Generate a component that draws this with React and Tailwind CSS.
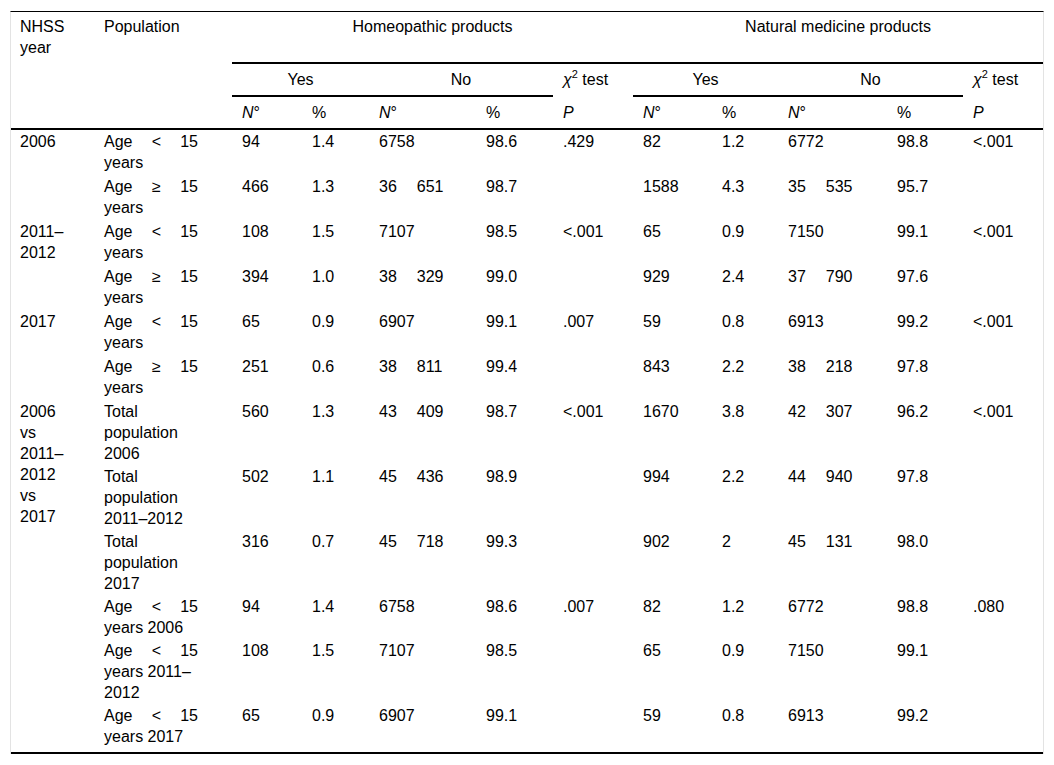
import React from "react";

const J = (a, b, c) => ({ j: [a, b, c] });

const rows = [
  { year: ["2006"], span: 2, pop: [J("Age", "<", "15"), "years"], v: ["94", "1.4", "6758", "98.6", ".429", "82", "1.2", "6772", "98.8", "<.001"] },
  { pop: [J("Age", "≥", "15"), "years"], v: ["466", "1.3", ["36", "651"], "98.7", "", "1588", "4.3", ["35", "535"], "95.7", ""] },
  { year: ["2011–", "2012"], span: 2, pop: [J("Age", "<", "15"), "years"], v: ["108", "1.5", "7107", "98.5", "<.001", "65", "0.9", "7150", "99.1", "<.001"] },
  { pop: [J("Age", "≥", "15"), "years"], v: ["394", "1.0", ["38", "329"], "99.0", "", "929", "2.4", ["37", "790"], "97.6", ""] },
  { year: ["2017"], span: 2, pop: [J("Age", "<", "15"), "years"], v: ["65", "0.9", "6907", "99.1", ".007", "59", "0.8", "6913", "99.2", "<.001"] },
  { pop: [J("Age", "≥", "15"), "years"], v: ["251", "0.6", ["38", "811"], "99.4", "", "843", "2.2", ["38", "218"], "97.8", ""] },
  { year: ["2006", "vs", "2011–", "2012", "vs", "2017"], span: 6, pop: ["Total", "population", "2006"], v: ["560", "1.3", ["43", "409"], "98.7", "<.001", "1670", "3.8", ["42", "307"], "96.2", "<.001"] },
  { pop: ["Total", "population", "2011–2012"], v: ["502", "1.1", ["45", "436"], "98.9", "", "994", "2.2", ["44", "940"], "97.8", ""] },
  { pop: ["Total", "population", "2017"], v: ["316", "0.7", ["45", "718"], "99.3", "", "902", "2", ["45", "131"], "98.0", ""] },
  { pop: [J("Age", "<", "15"), "years 2006"], v: ["94", "1.4", "6758", "98.6", ".007", "82", "1.2", "6772", "98.8", ".080"] },
  { pop: [J("Age", "<", "15"), "years 2011–", "2012"], v: ["108", "1.5", "7107", "98.5", "", "65", "0.9", "7150", "99.1", ""] },
  { pop: [J("Age", "<", "15"), "years 2017"], v: ["65", "0.9", "6907", "99.1", "", "59", "0.8", "6913", "99.2", ""] },
];

// padding classes per body row (rows 1-6 are 45px, later rows a little tighter)
const rowPad = [
  "pt-[1px] pb-[2px]",
  "pt-[1px] pb-[2px]",
  "pt-[1px] pb-[2px]",
  "pt-[1px] pb-[2px]",
  "pt-[1px] pb-[2px]",
  "pt-[1px] pb-[2px]",
  "pt-[1px] pb-[1px]",
  "pt-[1px] pb-[1px]",
  "pt-[1px] pb-[1px]",
  "pt-[1px] pb-[1px]",
  "pt-[1px] pb-[1px]",
  "pt-[1px] pb-[5px] border-b-2 border-black",
];

function PopLine({ line }) {
  if (typeof line === "string") return <div>{line}</div>;
  return (
    <div className="flex justify-between">
      <span>{line.j[0]}</span>
      <span>{line.j[1]}</span>
      <span>{line.j[2]}</span>
    </div>
  );
}

function Val({ v }) {
  if (Array.isArray(v))
    return (
      <span className="whitespace-nowrap">
        {v[0]}
        <span className="ml-[20px]">{v[1]}</span>
      </span>
    );
  return v;
}

const Chi = () => (
  <span className="whitespace-nowrap">
    <i>χ</i>
    <sup className="text-[11px] -top-[7px]">2</sup> test
  </span>
);

const th = "align-top text-left font-normal pl-[10px]";
const hb = "border-b-2 border-black";

export default function App() {
  return (
    <div className="bg-white min-h-[765px] pt-[11px] pl-[10px] font-['Liberation_Sans',Arial,sans-serif] text-[16px] leading-[21px] text-black">
      <div className="w-[1034px] border-t border-t-black border-x border-x-[#e3e3e3]">
        <table className="w-full table-fixed border-separate border-spacing-0">
          <colgroup>
            <col className="w-[83px]" />
            <col className="w-[138px]" />
            <col className="w-[70px]" />
            <col className="w-[67px]" />
            <col className="w-[107px]" />
            <col className="w-[77px]" />
            <col className="w-[80px]" />
            <col className="w-[79px]" />
            <col className="w-[66px]" />
            <col className="w-[109px]" />
            <col className="w-[76px]" />
            <col className="w-[80px]" />
          </colgroup>
          <thead>
            <tr>
              <th rowSpan={3} className={`${th} ${hb} pt-[4px] !pl-[9px]`}>
                NHSS
                <br />
                year
              </th>
              <th rowSpan={3} className={`${th} ${hb} pt-[4px]`}>Population</th>
              <th colSpan={5} className={`${hb} font-normal text-center align-top pt-[4px] pb-[25px]`}>Homeopathic products</th>
              <th colSpan={5} className={`${hb} font-normal text-center align-top pt-[4px] pb-[25px]`}>Natural medicine products</th>
            </tr>
            <tr>
              <th colSpan={2} className={`${hb} font-normal text-center py-[5px]`}>Yes</th>
              <th colSpan={2} className={`${hb} font-normal text-center py-[5px]`}>No</th>
              <th className={`${th} py-[5px]`}><Chi /></th>
              <th colSpan={2} className={`${hb} font-normal text-center py-[5px]`}>Yes</th>
              <th colSpan={2} className={`${hb} font-normal text-center py-[5px]`}>No</th>
              <th className={`${th} py-[5px]`}><Chi /></th>
            </tr>
            <tr>
              {["N°", "%", "N°", "%", "P", "N°", "%", "N°", "%", "P"].map((t, i) => (
                <th key={i} className={`${th} ${hb} py-[5px]`}>
                  {t === "N°" ? (
                    <>
                      <i>N</i>°
                    </>
                  ) : t === "P" ? (
                    <i>P</i>
                  ) : (
                    t
                  )}
                </th>
              ))}
            </tr>
          </thead>
          <tbody>
            {rows.map((r, ri) => {
              const pad = rowPad[ri];
              return (
                <tr key={ri}>
                  {r.year && (
                    <td rowSpan={r.span} className={`align-top pl-[9px] pt-[1px] ${r.span === 6 ? "border-b-2 border-black" : ""}`}>
                      {r.year.map((y, i) => (
                        <div key={i}>{y}</div>
                      ))}
                    </td>
                  )}
                  <td className={`align-top pl-[10px] ${pad}`}>
                    <div className="w-[94px]">
                      {r.pop.map((l, i) => (
                        <PopLine key={i} line={l} />
                      ))}
                    </div>
                  </td>
                  {r.v.map((v, i) => (
                    <td key={i} className={`align-top pl-[10px] whitespace-nowrap ${pad}`}>
                      <Val v={v} />
                    </td>
                  ))}
                </tr>
              );
            })}
          </tbody>
        </table>
      </div>
    </div>
  );
}
